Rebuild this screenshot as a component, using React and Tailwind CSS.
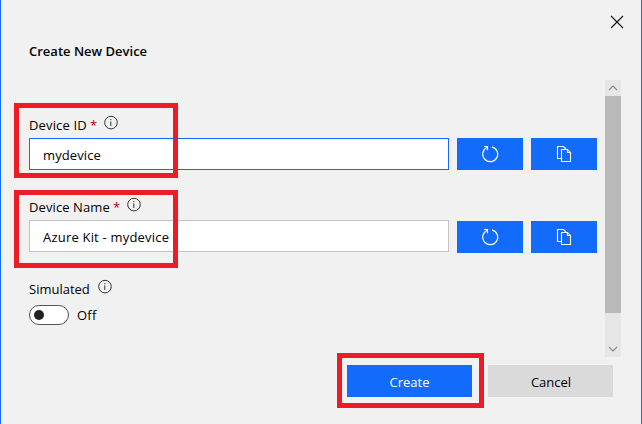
import React from 'react';

function InfoIcon({ className = '' }) {
  return (
    <svg className={className} width="14" height="15" viewBox="0 0 14 15" fill="none">
      <circle cx="7" cy="7.6" r="6.3" stroke="#333" strokeWidth="1" />
      <path d="M6.8 6.4V11M6.8 4V5.2" stroke="#333" strokeWidth="1" />
    </svg>
  );
}

function RefreshIcon() {
  return (
    <svg width="18" height="18" viewBox="0 0 18 18" fill="none" stroke="#fff" strokeWidth="1.2">
      <path d="M11 1.9A7.5 7.5 0 1 1 5.4 2.7L6.5 1.6" />
      <path d="M3 1.5H6.5V5.2" />
    </svg>
  );
}

function CopyIcon() {
  return (
    <svg width="16" height="18" viewBox="0 0 16 18" fill="none" stroke="#fff" strokeWidth="1.1">
      <path d="M5.5 13.5H1.5V1.5H7.5L10 4" />
      <path d="M5.5 4.5H11.5L14.5 7.5V16.5H5.5Z" />
      <path d="M11.5 4.5V7.5H14.5" />
    </svg>
  );
}

function ActionButton({ children }) {
  return (
    <button className="flex h-8 w-[66px] items-center justify-center bg-[#136bfb]">{children}</button>
  );
}

function Field({ label, labelClass, value, valueClass, inputClass, actionsClass }) {
  return (
    <div>
      <div className="flex h-5 leading-5">
        <span className={labelClass}>{label}</span>
        <span className="ml-[3px] w-[7px] text-[#b00000]">*</span>
        <InfoIcon className="ml-[7px]" />
      </div>
      <div className="mt-[3px] flex gap-2">
        <div className={`h-8 w-[420px] border bg-white pl-[13px] leading-8 ${inputClass}`}>
          <span className={valueClass}>{value}</span>
        </div>
        <div className={`flex gap-2 ${actionsClass}`}>
          <ActionButton><RefreshIcon /></ActionButton>
          <ActionButton><CopyIcon /></ActionButton>
        </div>
      </div>
    </div>
  );
}

function Chevron({ d }) {
  return (
    <svg width="16" height="16" viewBox="0 0 16 16" fill="none" stroke="#888" strokeWidth="1.1">
      <path d={d} />
    </svg>
  );
}

export default function App() {
  return (
    <div className="relative flex h-[424px] w-[642px] flex-col overflow-hidden whitespace-nowrap border-x border-[#136bfb] bg-[#f1f1f1] font-['Open_Sans','Noto_Sans',sans-serif] text-[13px] text-black">
      <header className="flex h-20 shrink-0 items-start justify-between pl-7 pr-[17px]">
        <h1 className="mt-[41px] text-[13px] font-semibold leading-5">Create New Device</h1>
        <button className="mt-[15px]">
          <svg width="14" height="14" viewBox="0 0 14 14" stroke="#111" strokeWidth="1.1">
            <path d="M1 1L13 13M13 1L1 13" />
          </svg>
        </button>
      </header>

      <main className="flex h-[277px] shrink-0 justify-between pl-7 pr-5">
        <div className="pt-[35px]">
          <Field
            label="Device ID"
            labelClass="w-[58px] tracking-[0.15px]"
            value="mydevice"
            valueClass="tracking-[0.1px]"
            inputClass="border-[#136bfb]"
            actionsClass=""
          />
          <div className="mt-[27px]">
            <Field
              label="Device Name"
              labelClass="w-[81px] tracking-[0.1px]"
              value="Azure Kit - mydevice"
              valueClass="tracking-[0.2px]"
              inputClass="border-[#c4c4c4]"
              actionsClass="pt-px"
            />
          </div>
          <div className="mt-[26px] flex h-5 gap-2 leading-5">
            <span className="w-[61px]">Simulated</span>
            <InfoIcon />
          </div>
          <div className="mt-[6px] flex h-5 gap-2 leading-5">
            <div className="flex h-5 w-10 items-center rounded-full border border-[#555] bg-white pl-1">
              <div className="size-[10px] rounded-full bg-[#222]" />
            </div>
            <span className="tracking-[0.2px]">Off</span>
          </div>
        </div>
        <div className="flex w-4 flex-col justify-between bg-[#e6e6e6]">
          <Chevron d="M4 10L8 6L12 10" />
          <div className="mb-auto h-[217px] bg-[#b9b9b9]" />
          <Chevron d="M4 6L8 10L12 6" />
        </div>
      </main>

      <footer className="mt-2 flex gap-4 pl-[346px]">
        <button className="h-8 w-[125px] bg-[#136bfb] pt-[3px] text-white">Create</button>
        <button className="h-8 w-[125px] bg-[#dadada] pl-px pt-[3px]">Cancel</button>
      </footer>

      <div className="absolute left-[13px] top-[103px] h-[75px] w-[164px] border-[5px] border-[#ed1c24]" />
      <div className="absolute left-[13px] top-[190px] h-[78px] w-[164px] border-[5px] border-[#ed1c24]" />
      <div className="absolute left-[336px] top-[353px] h-[55px] w-[147px] border-[5px] border-[#ed1c24]" />
    </div>
  );
}
